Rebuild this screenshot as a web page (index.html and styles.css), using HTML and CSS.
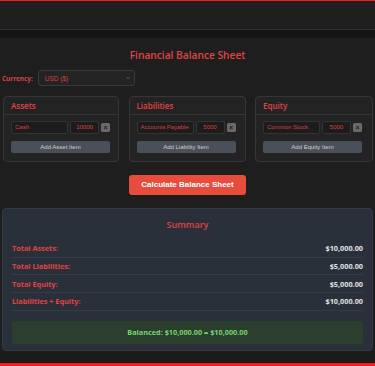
FILE: index.html
```html
<!DOCTYPE html>
<html lang="en">
<head>
<meta charset="utf-8">
<title>Financial Balance Sheet</title>
<link rel="stylesheet" href="styles.css">
</head>
<body>
<header class="topbar"></header>
<div class="band"></div>
<main class="page">
  <h1 class="title">Financial Balance Sheet</h1>
  <div class="currency-row">
    <label class="currency-label" for="cur">Currency:</label>
    <div class="select">
      <span>USD ($)</span>
      <svg class="chev" viewBox="0 0 8 8" width="6" height="6"><path d="M1.5 2.8 L4 5.3 L6.5 2.8" fill="none" stroke="#c0392b" stroke-width="1.2"/></svg>
    </div>
  </div>
  <div class="cards">
    <section class="card">
      <div class="card-head">Assets</div>
      <div class="card-body">
        <div class="item-row">
          <div class="inp name">Cash</div>
          <div class="inp val">10000</div>
          <div class="del">×</div>
        </div>
        <div class="add-btn">Add Asset Item</div>
      </div>
    </section>
    <section class="card">
      <div class="card-head">Liabilities</div>
      <div class="card-body">
        <div class="item-row">
          <div class="inp name">Accounts Payable</div>
          <div class="inp val">5000</div>
          <div class="del">×</div>
        </div>
        <div class="add-btn">Add Liability Item</div>
      </div>
    </section>
    <section class="card">
      <div class="card-head">Equity</div>
      <div class="card-body">
        <div class="item-row">
          <div class="inp name">Common Stock</div>
          <div class="inp val">5000</div>
          <div class="del">×</div>
        </div>
        <div class="add-btn">Add Equity Item</div>
      </div>
    </section>
  </div>
  <div class="calc-wrap"><div class="calc-btn">Calculate Balance Sheet</div></div>
  <section class="summary">
    <h2 class="sum-title">Summary</h2>
    <div class="sum-row"><span class="lbl">Total Assets:</span><span class="amt">$10,000.00</span></div>
    <div class="sum-row"><span class="lbl">Total Liabilities:</span><span class="amt">$5,000.00</span></div>
    <div class="sum-row"><span class="lbl">Total Equity:</span><span class="amt">$5,000.00</span></div>
    <div class="sum-row"><span class="lbl">Liabilities + Equity:</span><span class="amt">$10,000.00</span></div>
    <div class="balanced">Balanced: $10,000.00 = $10,000.00</div>
  </section>
</main>
<div class="band-bottom"></div>
<footer class="bottombar"></footer>
</body>
</html>
```
FILE: styles.css
```css
* { box-sizing: border-box; }
html, body { margin: 0; padding: 0; }
body {
  background: #1e1e1e;
  font-family: "Open Sans", "Noto Sans", sans-serif;
  color: #ddd;
  height: 366px;
  overflow: hidden;
}
.topbar {
  height: 30px;
  background: #1f1f1f;
  border-top: 1.5px solid #ff1a1a;
  border-bottom: 1px solid #333;
}
.band { height: 8px; background: #141414; }
.page { padding: 0 2px 0 2px; }
.title {
  margin: 0;
  padding-top: 9px;
  height: 32px;
  text-align: center;
  color: #e04343;
  font-size: 10.2px;
  font-weight: 600;
  line-height: 16px;
}
.currency-row {
  display: flex;
  align-items: center;
  height: 16px;
  gap: 5px;
}
.currency-label {
  color: #d94040;
  font-size: 6.4px;
  font-weight: 700;
}
.select {
  width: 97px;
  height: 16px;
  background: #232323;
  border: 1px solid #3a3a3a;
  border-radius: 3px;
  display: flex;
  align-items: center;
  justify-content: space-between;
  padding: 0 3px 0 6px;
  font-family: "Liberation Sans", Arial, sans-serif;
  font-size: 6.5px;
  color: #d94040;
}
.cards {
  margin-top: 10px;
  display: grid;
  grid-template-columns: 116px 117px 118px;
  column-gap: 9.5px;
  padding-left: 1px;
}
.card {
  height: 66px;
  background: #232323;
  border: 1px solid #363636;
  border-radius: 4px;
}
.card-head {
  height: 18px;
  border-bottom: 1px solid #363636;
  padding-left: 7px;
  color: #e04343;
  font-size: 8px;
  font-weight: 600;
  line-height: 17px;
}
.card-body { padding: 6px 8px 0 7px; }
.item-row {
  display: flex;
  align-items: center;
  gap: 2px;
  height: 13px;
}
.inp {
  height: 13px;
  background: #1c1c1c;
  border: 1px solid #333;
  border-radius: 2px;
  font-family: "Liberation Sans", Arial, sans-serif;
  font-size: 6px;
  color: #d94040;
  line-height: 11px;
  padding-left: 3px;
  white-space: nowrap;
  overflow: hidden;
}
.inp.name { width: 57px; }
.inp.val { width: 29px; text-align: center; padding-left: 0; }
.del {
  width: 9px;
  height: 9px;
  background: #6a6a6a;
  border-radius: 1.5px;
  color: #222;
  font-family: "Liberation Sans", Arial, sans-serif;
  font-size: 7px;
  line-height: 9px;
  text-align: center;
  font-weight: 700;
}
.add-btn {
  margin-top: 7px;
  height: 12px;
  width: 99px;
  background: #4a5059;
  border-radius: 2px;
  text-align: center;
  font-family: "Liberation Sans", Arial, sans-serif;
  font-size: 6px;
  line-height: 12px;
  color: #cfcfcf;
}
.calc-wrap {
  display: flex;
  justify-content: center;
  padding-top: 13px;
  height: 46px;
}
.calc-btn {
  width: 117px;
  height: 20px;
  background: #e74c3c;
  border-radius: 3px;
  color: #fff;
  font-family: "Liberation Sans", Arial, sans-serif;
  font-weight: 700;
  font-size: 8px;
  line-height: 20px;
  text-align: center;
}
.summary {
  height: 143px;
  background: #29303a;
  border: 1px solid #333b45;
  border-radius: 4px;
  padding: 0 9px 0 9px;
}
.sum-title {
  margin: 0;
  text-align: center;
  color: #e04343;
  font-size: 9px;
  font-weight: 600;
  line-height: 14px;
  padding-top: 9px;
  height: 31px;
}
.sum-row {
  display: flex;
  justify-content: space-between;
  align-items: center;
  height: 17.7px;
  border-bottom: 1px solid #353c46;
  font-size: 7.3px;
  font-weight: 700;
}
.lbl { color: #e04343; }
.amt { color: #e2e2e2; }
.balanced {
  margin-top: 10px;
  height: 23px;
  background: #2c3e2d;
  border-radius: 3px;
  color: #72d672;
  font-size: 7.3px;
  font-weight: 700;
  line-height: 23px;
  text-align: center;
}
.band-bottom { height: 11px; background: #1b1b1b; margin-top: 0; }
.bottombar {
  height: 4px;
  background: #141414;
  border-bottom: 3px solid #ff1a1a;
}
```
